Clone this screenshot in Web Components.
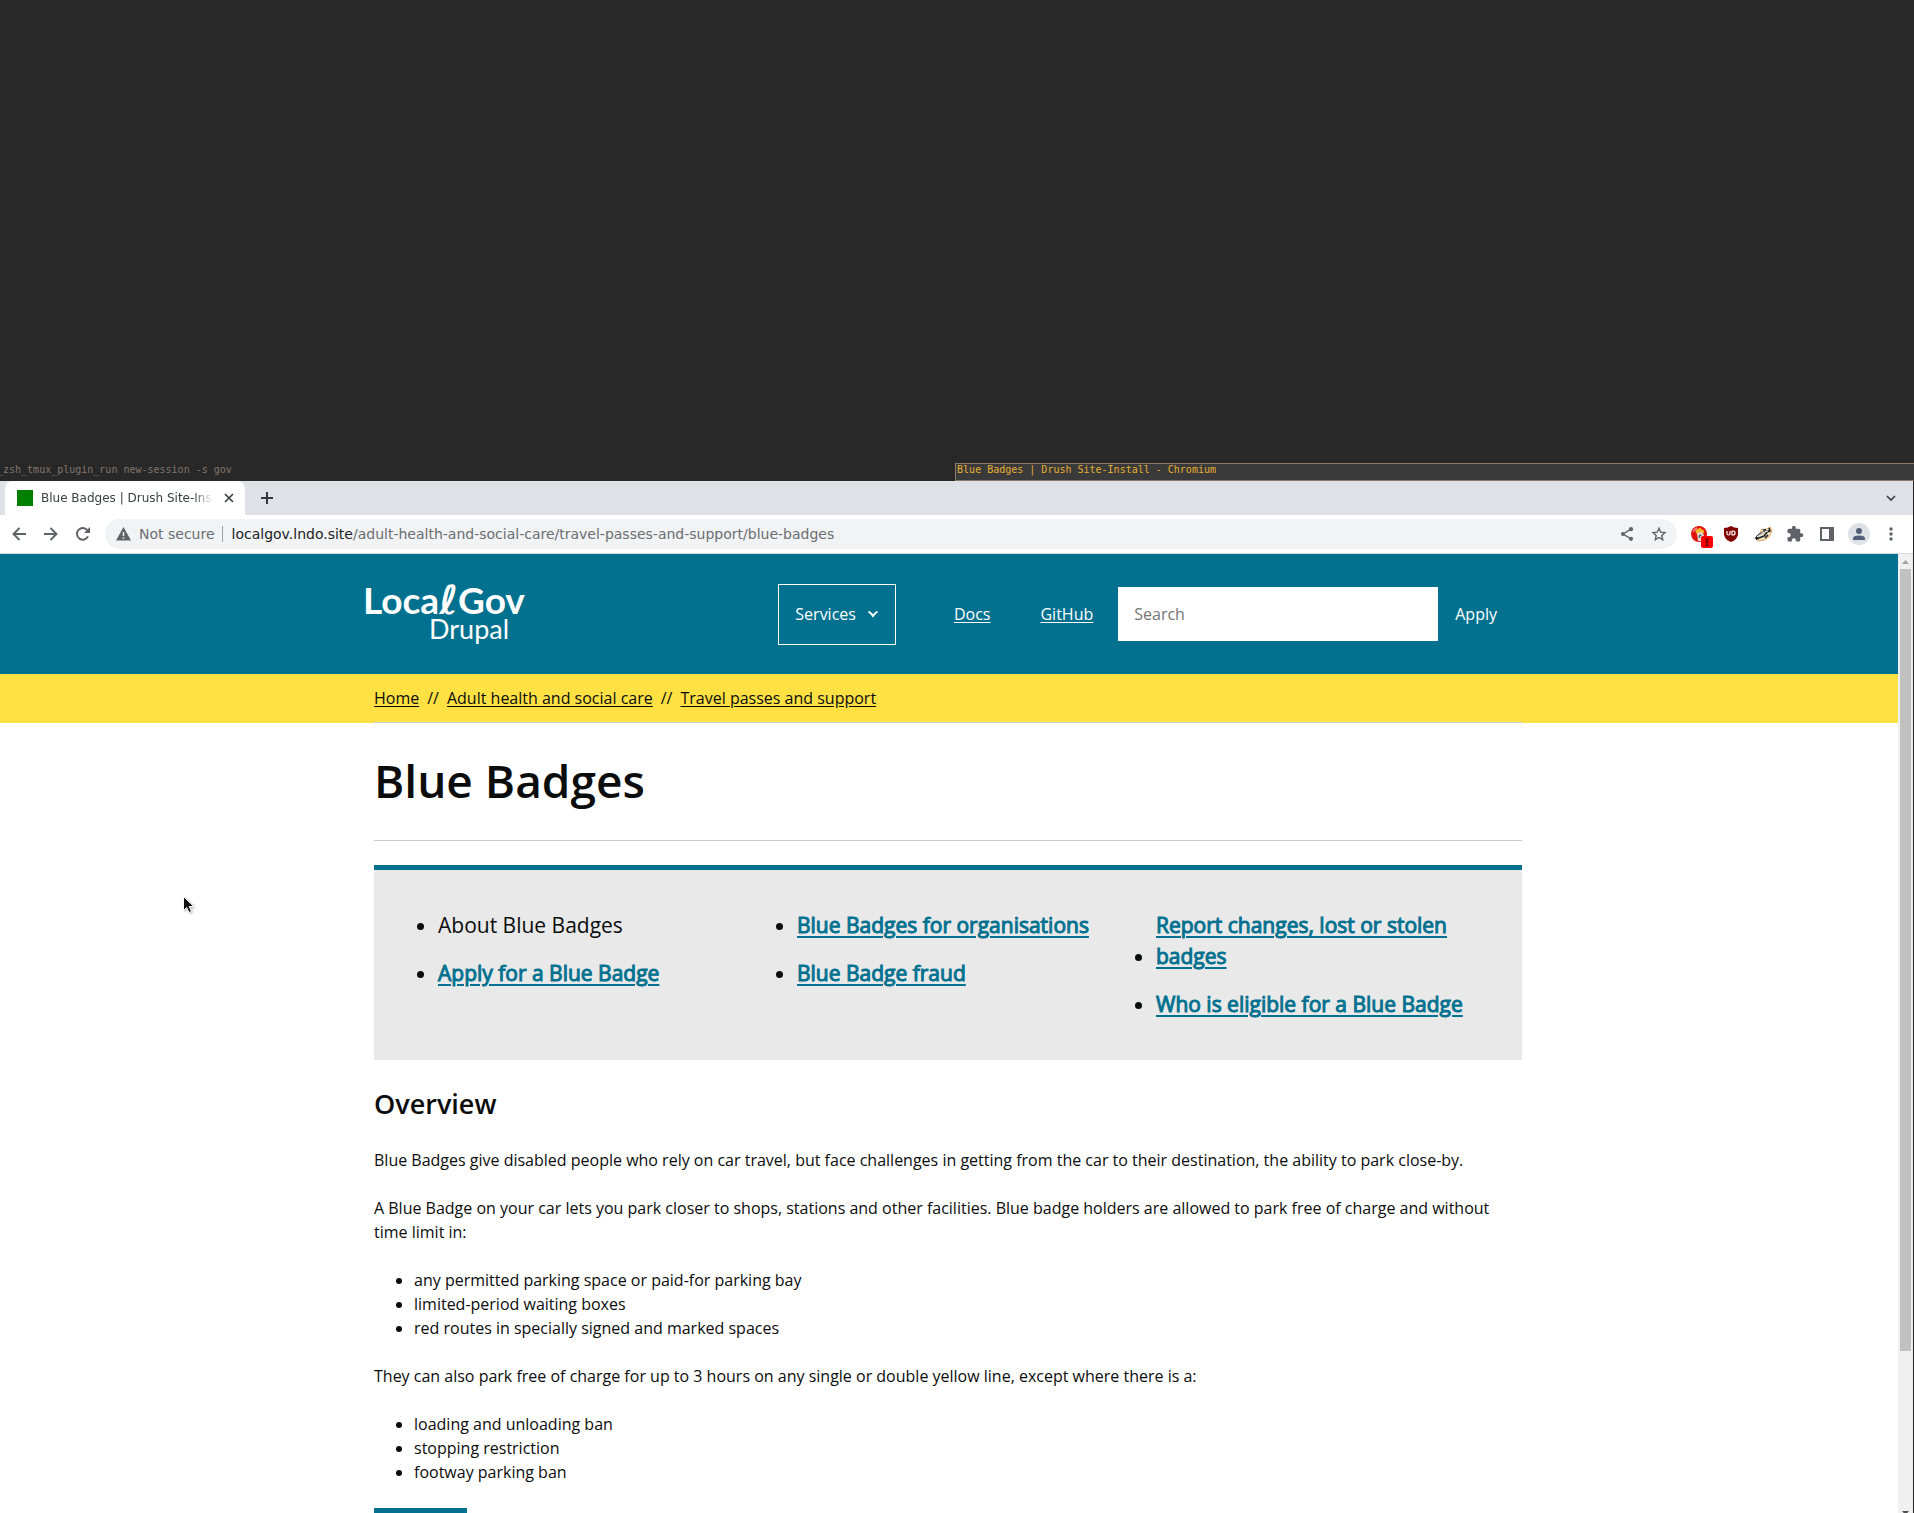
<!DOCTYPE html>
<html lang="en">
<head>
<meta charset="utf-8">
<title>Blue Badges | Drush Site-Install</title>
<style>
  html, body { margin: 0; height: 100%; }
  body { --teal: #02718f; --yellow: #ffe144; background: #282828; overflow: hidden; position: relative; }
  a { color: inherit; }
</style>
</head>
<body>
<tiled-desktop>
  <pane-titles slot="titles"></pane-titles>
  <browser-window>
    <tab-strip slot="tabs"></tab-strip>
    <browser-toolbar slot="toolbar"></browser-toolbar>
    <site-header></site-header>
    <bread-crumbs></bread-crumbs>
    <site-article>
      <h1 slot="title">Blue Badges</h1>
      <guide-nav slot="nav"></guide-nav>
      <guide-body></guide-body>
    </site-article>
  </browser-window>
</tiled-desktop>
<mouse-pointer></mouse-pointer>

<script>
const define = (name, html) => {
  const template = document.createElement('template');
  template.innerHTML = html;
  customElements.define(name, class extends HTMLElement {
    constructor() {
      super();
      this.attachShadow({ mode: 'open' }).append(template.content.cloneNode(true));
    }
  });
};

define('tiled-desktop', `
<style>
  :host { display: flex; flex-direction: column; height: 100vh; overflow: hidden; }
  .empty { flex: 0 0 463px; }
</style>
<div class="empty"></div>
<slot name="titles"></slot>
<slot></slot>`);

define('pane-titles', `
<style>
  :host { display: flex; flex: none; height: 18px; font: 10px/12px "DejaVu Sans Mono", "Liberation Mono", monospace; }
  div { flex: 1; box-sizing: border-box; border: 1px solid transparent; white-space: pre; }
  .idle { flex: 0 0 49.9%; color: #83766b; border-left: 0; text-indent: -3px; }
  .focused { color: #e8ae32; background: #3a3a3a; border-color: #8b7a6c; border-right: 0; padding-left: 1px; }
</style>
<div class="idle">_zsh_tmux_plugin_run new-session -s gov</div>
<div class="focused">Blue Badges | Drush Site-Install - Chromium</div>`);

define('browser-window', `
<style>
  :host { display: flex; flex-direction: column; flex: 1; min-height: 0; border-right: 1px solid #222; background: #fff; }
  .view { display: flex; flex: 1; min-height: 0; }
  .page { flex: 1; min-width: 0; overflow: hidden; }
</style>
<slot name="tabs"></slot>
<slot name="toolbar"></slot>
<div class="view">
  <div class="page"><slot></slot></div>
  <scroll-bar></scroll-bar>
</div>`);

define('scroll-bar', `
<style>
  :host { display: flex; flex-direction: column; flex: 0 0 15px; background: #f0f0f0; }
  svg { display: block; flex: none; width: 15px; }
  .thumb { flex: 782; margin: 0 2px; background: #c1c1c1; }
  .rest { flex: 156; }
  .down { height: 6px; }
</style>
<svg height="15" viewBox="0 0 15 15"><path d="M4 10l3.5-4L11 10z" fill="#a3a3a3"/></svg>
<div class="thumb"></div>
<div class="rest"></div>
<svg class="down" viewBox="0 0 15 6"><path d="M4 4h7l-3.500 4z" fill="#505050"/></svg>`);

define('tab-strip', `
<style>
  :host { display: flex; align-items: stretch; flex: none; height: 34px; background: #dee1e6; padding: 0 15px 0 5px; font: 12px/34px "DejaVu Sans", sans-serif; color: #3c4043; }
  .tab { display: flex; align-items: center; box-sizing: border-box; width: 240px; padding: 0 9px 0 12px; background: #fff; border-radius: 8px 8px 0 0; }
  .icon { flex: none; width: 16px; height: 16px; background: #008000; margin-right: 8px; }
  .name { flex: 1; overflow: hidden; white-space: nowrap; -webkit-mask-image: linear-gradient(to right, #000 152px, transparent 172px); mask-image: linear-gradient(to right, #000 152px, transparent 172px); }
  button { display: grid; place-items: center; width: 14px; padding: 0; border: 0; background: none; }
  .close { height: 14px; margin-left: 4px; }
  .add { margin-left: 15px; }
  .menu { margin-left: auto; }
  svg { display: block; }
</style>
<div class="tab">
  <span class="icon"></span><span class="name">Blue Badges | Drush Site-Install</span>
  <button class="close" aria-label="Close tab"><svg width="10" height="10" viewBox="0 0 10 10"><path d="M1 1l8 8M9 1l-8 8" stroke="#3c4043" stroke-width="1.700"/></svg></button>
</div>
<button class="add" aria-label="New tab"><svg width="12" height="12" viewBox="0 0 12 12"><path d="M6 0v12M0 6h12" stroke="#34373b" stroke-width="2"/></svg></button>
<button class="menu" aria-label="Search tabs"><svg width="10" height="7" viewBox="0 0 10 7"><path d="M1 1l4 4 4-4" fill="none" stroke="#3c4043" stroke-width="1.700"/></svg></button>`);

define('browser-toolbar', `
<style>
  :host { display: flex; align-items: center; flex: none; box-sizing: border-box; height: 39px; background: #fff; border-bottom: 1px solid #d8dbe0; padding: 0 6px 0 3px; font: 14px/30px "DejaVu Sans", sans-serif; }
  button { display: grid; place-items: center; flex: none; width: 32px; height: 30px; padding: 0; border: 0; background: none; }
  svg { display: block; overflow: visible; }
  .address { display: flex; align-items: center; flex: 1; height: 30px; margin: 0 6px; border-radius: 15px; background: #f1f3f4; padding: 0 2px 0 11px; white-space: nowrap; }
  .state { color: #6b6e72; margin-left: 8px; }
  .rule { width: 1px; height: 16px; background: #9fa3a8; margin: 0 9px 0 7px; }
  .url { flex: 1; color: #6b6e72; }
  .url b { font-weight: 400; color: #202124; }
</style>
<button aria-label="Back"><svg width="14" height="14" viewBox="0 0 14 14"><path d="M14 7H1.500M7.500 1L1.500 7l6 6" fill="none" stroke="#5f6368" stroke-width="1.900"/></svg></button>
<button aria-label="Forward"><svg width="14" height="14" viewBox="0 0 14 14"><path d="M0 7h12.500M6.500 1l6 6-6 6" fill="none" stroke="#5f6368" stroke-width="1.900"/></svg></button>
<button aria-label="Reload"><svg width="14" height="14" viewBox="0 0 14 14"><path d="M12 9.400A5.800 5.800 0 1 1 11.300 3.200" fill="none" stroke="#5f6368" stroke-width="2"/><path d="M14 0v6H8z" fill="#5f6368"/></svg></button>
<div class="address">
  <svg width="15" height="14" viewBox="0 0 15 14"><path d="M7.500 0L15 13.500H0z" fill="#5f6368"/><path d="M7.500 5v4M7.500 10.200v1.600" stroke="#f1f3f4" stroke-width="1.500"/></svg>
  <span class="state">Not secure</span><span class="rule"></span>
  <span class="url"><b>localgov.lndo.site</b>/adult-health-and-social-care/travel-passes-and-support/blue-badges</span>
  <button aria-label="Share"><svg width="12" height="14" viewBox="0 0 12 14"><path d="M10 2.200L2 7l8 4.800" fill="none" stroke="#5f6368" stroke-width="1.400"/><g fill="#5f6368"><circle cx="10" cy="2.200" r="2.100"/><circle cx="2" cy="7" r="2.100"/><circle cx="10" cy="11.800" r="2.100"/></g></svg></button>
  <button aria-label="Bookmark"><svg width="14" height="14" viewBox="0 0 14 14"><path d="M7 1.200l1.700 4 4.300.4-3.200 2.900.9 4.300L7 10.500l-3.700 2.300.9-4.300L1 5.600l4.300-.4z" fill="none" stroke="#5f6368" stroke-width="1.400"/></svg></button>
</div>
<button aria-label="Extension"><svg width="16" height="16" viewBox="0 0 16 16"><circle cx="8" cy="8" r="8" fill="#e0120b"/><path d="M2 6a6.500 6.500 0 0 1 4-4" stroke="#f88" fill="none" stroke-width="1.500"/><path d="M4.500 6Q4 3 7 3q2-2 4 .500 3 .500 2 3L11 8H6z" fill="#f5b52d"/><path d="M6 7l5-1 2 3-2 6H7z" fill="#eadbd0"/><path d="M8.500 12q-1-3 2-3" fill="none" stroke="#526078" stroke-width="1.500"/><rect x="10" y="10" width="12" height="12" rx="2" fill="#f00"/><path d="M14 13h4M14 19.500h4M16 13v6M14.500 16h3" stroke="#600" stroke-width="1.200"/></svg></button>
<button aria-label="uBlock"><svg width="14" height="16" viewBox="0 0 14 16"><path d="M7 0q3 2 7 2v6q0 5-7 8-7-3-7-8V2q4 0 7-2z" fill="#800000"/><path d="M3 5v2.500q0 1.500 1.500 1.500T6 7.500V5M8 5v4h1q2 0 2-2T9 5H7.500" fill="none" stroke="#fff" stroke-width="1.200"/></svg></button>
<button aria-label="Privacy Badger"><svg width="17" height="14" viewBox="0 0 17 14"><path d="M1 11l4-5 2-4 3 1 5-3 2 4-3 6-5 3-6 1z" fill="#f2e6cf" stroke="#d99035" stroke-width=".8"/><path d="M1 11Q5 5 13 4L9 9l-5 2zM8 3l3-.5M14 1l1 3-3 1M10 11l3-3" fill="none" stroke="#222" stroke-width="1.600"/><path d="M2 10q4-5 11-6" stroke="#fff" stroke-width="1" fill="none"/><path d="M1 10l3 2-3 1z" fill="#111"/></svg></button>
<button aria-label="Extensions"><svg width="18" height="18" viewBox="0 0 24 24"><path d="M20.500 11H19V7a2 2 0 0 0-2-2h-4V3.500a2.500 2.500 0 0 0-5 0V5H4a2 2 0 0 0-2 2v3.800h1.500a2.700 2.700 0 0 1 0 5.400H2V20a2 2 0 0 0 2 2h3.800v-1.500a2.700 2.700 0 0 1 5.400 0V22H17a2 2 0 0 0 2-2v-4h1.500a2.500 2.500 0 0 0 0-5z" fill="#5f6368"/></svg></button>
<button aria-label="Side panel"><svg width="14" height="14" viewBox="0 0 14 14"><path d="M0 0h14v14H0zM2 2v10h7V2z" fill="#5f6368" fill-rule="evenodd"/></svg></button>
<button aria-label="Profile"><svg width="22" height="22" viewBox="0 0 22 22"><circle cx="11" cy="11" r="11" fill="#dee1e6"/><circle cx="11" cy="8" r="3" fill="#525f76"/><path d="M5 17v-1.500Q5 12.500 11 12.500t6 3V17z" fill="#525f76"/></svg></button>
<button aria-label="Menu"><svg width="4" height="14" viewBox="0 0 4 14"><g fill="#5f6368"><circle cx="2" cy="2" r="1.700"/><circle cx="2" cy="7" r="1.700"/><circle cx="2" cy="12" r="1.700"/></g></svg></button>`);

define('site-header', `
<style>
  :host { display: block; background: var(--teal); color: #fff; font: 16px/24px "Open Sans", sans-serif; padding-right: 2px; }
  .inner { display: flex; align-items: center; box-sizing: border-box; max-width: 1180px; height: 120px; margin: 0 auto; padding: 0 24px 0 8px; }
  svg { display: block; overflow: visible; }
  nav { display: flex; align-items: center; margin-left: auto; }
  button { display: flex; align-items: center; font: inherit; color: inherit; background: none; border: 0; padding: 0 17px; height: 54px; }
  .services { gap: 11px; height: 61px; padding: 0 16px; border: 1px solid #fff; margin-right: 33px; }
  a { color: inherit; padding: 0 25px; text-underline-offset: 2px; }
  form { display: flex; }
  input { box-sizing: border-box; width: 320px; height: 54px; border: 0; padding: 0 16px; font: inherit; background: #fff; border-radius: 0; }
  input::placeholder { color: #757575; }
</style>
<div class="inner">
  <svg width="162" height="62" viewBox="0 0 162 62" role="img" aria-label="LocalGov Drupal" fill="#fff" font-family="Lato, sans-serif">
    <text x="-3" y="31" font-size="37" font-weight="700">Loca<tspan font-family="DejaVu Sans" font-size="40">ℓ</tspan>Gov</text>
    <text x="63" y="56" font-size="27">Drupal</text>
  </svg>
  <nav>
    <button class="services">Services <svg width="12" height="8" viewBox="0 0 12 8"><path d="M1.500 1.500Q4 3 6 6q2-3 4.500-4.500" fill="none" stroke="#fff" stroke-width="2"/></svg></button>
    <a href="#docs">Docs</a><a href="#github">GitHub</a>
  </nav>
  <form><input type="search" placeholder="Search" aria-label="Search"><button type="button">Apply</button></form>
</div>`);

define('bread-crumbs', `
<style>
  :host { display: block; background: var(--yellow); color: #0b0c0c; font: 16px/24px "Open Sans", sans-serif; padding-right: 2px; }
  ol { display: flex; gap: 8px; box-sizing: border-box; max-width: 1148px; margin: 0 auto; padding: 12px 0; border-bottom: 1px solid #d0d0d0; list-style: none; }
  li { display: flex; gap: 8px; }
  a { color: inherit; text-underline-offset: 2px; }
</style>
<ol>
  <li><a href="#home">Home</a></li>
  <li><span>//</span><a href="#adult">Adult health and social care</a></li>
  <li><span>//</span><a href="#travel">Travel passes and support</a></li>
</ol>`);

define('site-article', `
<style>
  :host { display: block; padding-right: 2px; color: #0b0c0c; font: 16px/24px "Open Sans", sans-serif; }
  main { max-width: 1148px; margin: 0 auto; }
  ::slotted(h1) { margin: 0; padding: 24px 0 26px; font: 600 46px/67px "Open Sans", sans-serif; border-bottom: 1px solid #ccc; }
</style>
<main><slot name="title"></slot><slot name="nav"></slot><slot></slot></main>`);

define('guide-nav', `
<style>
  :host { display: block; margin-top: 24px; padding: 40px 51px 24px 24px; border-top: 5px solid var(--teal); background: #e9e9e9; font-size: 21px; line-height: 31px; }
  nav { display: grid; grid-template-columns: repeat(3, 1fr); column-gap: 4px; }
  ul { margin: 0; padding: 0 0 0 40px; }
  li { margin-bottom: 17px; }
  li:last-child { margin-bottom: 16px; }
  a { display: inline-block; color: var(--teal); -webkit-text-stroke: 1px var(--teal); text-decoration-thickness: 2px; text-underline-offset: 3px; }
</style>
<nav aria-label="Guide pages">
  <ul><li>About Blue Badges</li><li><a href="#apply">Apply for a Blue Badge</a></li></ul>
  <ul><li><a href="#organisations">Blue Badges for organisations</a></li><li><a href="#fraud">Blue Badge fraud</a></li></ul>
  <ul><li><a href="#report">Report changes, lost or stolen badges</a></li><li><a href="#eligible">Who is eligible for a Blue Badge</a></li></ul>
</nav>`);

define('guide-body', `
<style>
  :host { display: block; padding-top: 24px; }
  h2 { margin: 0 0 24px; font: 600 27px/40px "Open Sans", sans-serif; }
  p, ul { margin: 0 0 24px; }
  ul { padding-left: 40px; }
  .pager { width: 93px; height: 54px; background: var(--teal); }
</style>
<h2>Overview</h2>
<p>Blue Badges give disabled people who rely on car travel, but face challenges in getting from the car to their destination, the ability to park close-by.</p>
<p>A Blue Badge on your car lets you park closer to shops, stations and other facilities. Blue badge holders are allowed to park free of charge and without time limit in:</p>
<ul><li>any permitted parking space or paid-for parking bay</li><li>limited-period waiting boxes</li><li>red routes in specially signed and marked spaces</li></ul>
<p>They can also park free of charge for up to 3 hours on any single or double yellow line, except where there is a:</p>
<ul><li>loading and unloading ban</li><li>stopping restriction</li><li>footway parking ban</li></ul>
<div class="pager"></div>`);

define('mouse-pointer', `
<style>
  :host { position: absolute; left: 182px; top: 895px; pointer-events: none; }
  svg { display: block; filter: drop-shadow(1px 1px 1px rgba(0,0,0,.3)); }
</style>
<svg width="14" height="20" viewBox="0 0 14 20"><path d="M1.500 1.500v14l3.200-3 2.300 5 2.500-1-2.200-5h4.500z" fill="#111" stroke="#fff" stroke-width="1"/></svg>`);
</script>
</body>
</html>
